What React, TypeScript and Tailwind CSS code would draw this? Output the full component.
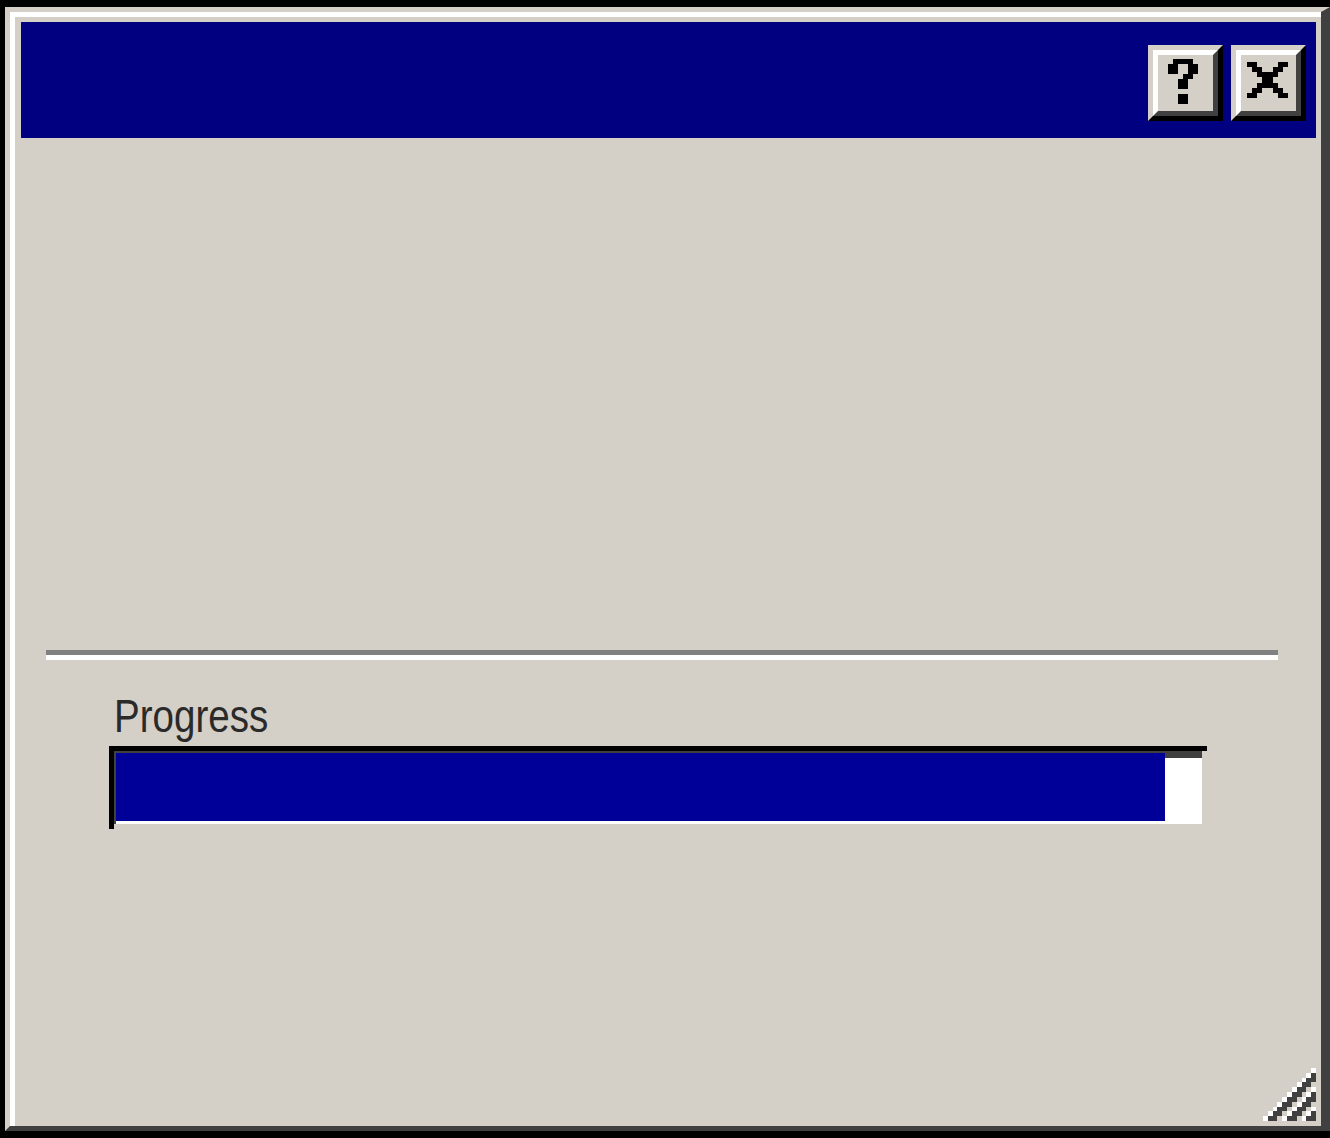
import React from 'react';

const HELP_ROWS = ['.####.', '##..##', '##..##', '...##.', '..##..', '..##..', '......', '..##..', '..##..'];
const CLOSE_ROWS = ['##....##', '.##..##.', '..####..', '...##...', '..####..', '.##..##.', '##....##'];

const PixelGlyph = ({ rows, w, h }: { rows: string[]; w: number; h: number }) => (
  <svg width={w} height={h} viewBox={`0 0 ${rows[0].length} ${rows.length}`} shapeRendering="crispEdges">
    {rows.map((row, y) =>
      row.split('').map((c, x) => (c === '#' ? <rect key={`${x}-${y}`} x={x} y={y} width={1} height={1} fill="#000" /> : null))
    )}
  </svg>
);

const TitleButton = ({ children, pad }: { children: React.ReactNode; pad: string }) => (
  <div className="w-[75px] h-[76px] border-t-[5px] border-l-[5px] border-t-[#d4d0c8] border-l-[#d4d0c8] border-b-[5px] border-r-[5px] border-b-black border-r-black">
    <div className={`w-full h-full bg-[#d4d0c8] border-t-[5px] border-l-[5px] border-t-white border-l-white border-b-[5px] border-r-[5px] border-b-[#404040] border-r-[#404040] ${pad}`}>
      {children}
    </div>
  </div>
);

// classic size grip: white line, two dark lines, one gap, repeated
const SizeGrip = () => {
  const cells: React.ReactNode[] = [];
  for (let y = 0; y < 11; y++) {
    for (let x = 0; x < 11; x++) {
      const d = x + y - 10;
      if (d < 0 || d > 10) continue;
      const m = d % 4;
      if (m === 3) continue;
      cells.push(<rect key={`${x}-${y}`} x={x} y={y} width={1} height={1} fill={m === 0 ? '#ffffff' : '#404040'} />);
    }
  }
  return (
    <svg width={53} height={53} viewBox="0 0 11 11" shapeRendering="crispEdges">
      {cells}
    </svg>
  );
};

const App = () => {
  return (
    <div className="w-[1330px] h-[1138px] bg-black pt-[7px] pl-[5px] overflow-hidden">
      <div className="h-[1124px] border-t-[5px] border-l-[5px] border-t-[#d4d0c8] border-l-[#d4d0c8] border-r-[9px] border-b-[5px] border-r-[#404040] border-b-[#404040]">
        <div className="h-full border-t-[5px] border-l-[5px] border-white">
          <div className="relative h-full bg-[#d4d0c8] pt-[5px] pl-[6px] pr-[5px] flex flex-col">
            <div className="h-[116px] bg-[#000080] flex justify-end items-start pt-[23px] pr-[10px] gap-[8px]">
              <TitleButton pad="pl-[10px] pt-[3px]">
                <PixelGlyph rows={HELP_ROWS} w={30} h={47} />
              </TitleButton>
              <TitleButton pad="pl-[5px] pt-[7px]">
                <PixelGlyph rows={CLOSE_ROWS} w={43} h={36} />
              </TitleButton>
            </div>

            <div className="mt-[512px] ml-[25px] mr-[38px]">
              <div className="h-[5px] bg-[#808080]" />
              <div className="h-[5px] bg-white" />
            </div>

            <div className="mt-[32px] ml-[93px] h-[47px] text-[47px] leading-none text-[#2a2a2a] font-['Liberation_Sans',Arial,sans-serif]">
              <span className="inline-block origin-left scale-x-[0.82]">Progress</span>
            </div>

            <div className="mt-[7px] ml-[88px] w-[1098px] h-[83px] border-t-[5px] border-l-[5px] border-black">
              <div className="w-[1088px] h-[73px] bg-white border-t-[2px] border-l-[2px] border-[#404040] flex items-start">
                <div className="w-[1049px] h-[68px] bg-[#000099]" />
                <div className="flex-1 h-[5px] bg-[#404040]" />
              </div>
            </div>

            <div className="absolute right-[5px] bottom-[5px]">
              <SizeGrip />
            </div>
          </div>
        </div>
      </div>
    </div>
  );
};

export default App;
